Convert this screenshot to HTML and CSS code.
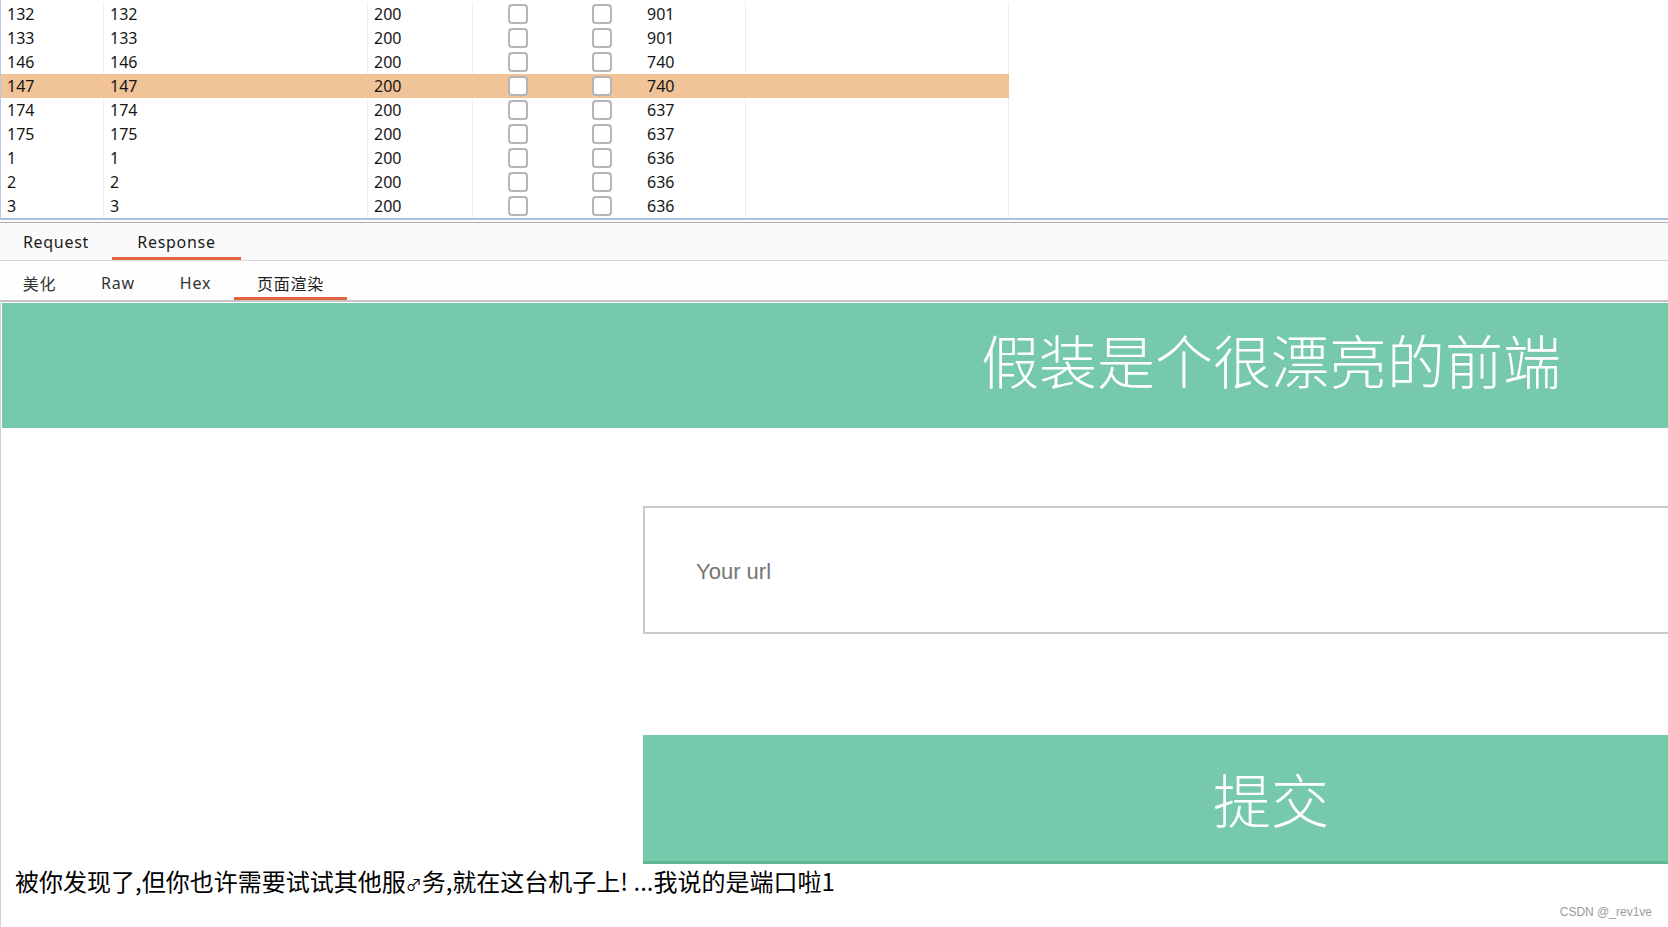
FILE: index.html
```html
<!DOCTYPE html>
<html lang="zh-CN">
<head>
<meta charset="utf-8">
<title>Response render</title>
<link rel="stylesheet" href="styles.css">
</head>
<body>
<div class="app">
  <div class="results">
    <div class="grid">
      <div class="row"><div class="c c1">132</div><div class="c c2">132</div><div class="c c3">200</div><div class="c c4"><span class="cb"></span></div><div class="c c5"><span class="cb"></span></div><div class="c c6">901</div><div class="c c7"></div></div>
      <div class="row"><div class="c c1">133</div><div class="c c2">133</div><div class="c c3">200</div><div class="c c4"><span class="cb"></span></div><div class="c c5"><span class="cb"></span></div><div class="c c6">901</div><div class="c c7"></div></div>
      <div class="row"><div class="c c1">146</div><div class="c c2">146</div><div class="c c3">200</div><div class="c c4"><span class="cb"></span></div><div class="c c5"><span class="cb"></span></div><div class="c c6">740</div><div class="c c7"></div></div>
      <div class="row sel"><div class="c c1">147</div><div class="c c2">147</div><div class="c c3">200</div><div class="c c4"><span class="cb"></span></div><div class="c c5"><span class="cb"></span></div><div class="c c6">740</div><div class="c c7"></div></div>
      <div class="row"><div class="c c1">174</div><div class="c c2">174</div><div class="c c3">200</div><div class="c c4"><span class="cb"></span></div><div class="c c5"><span class="cb"></span></div><div class="c c6">637</div><div class="c c7"></div></div>
      <div class="row"><div class="c c1">175</div><div class="c c2">175</div><div class="c c3">200</div><div class="c c4"><span class="cb"></span></div><div class="c c5"><span class="cb"></span></div><div class="c c6">637</div><div class="c c7"></div></div>
      <div class="row"><div class="c c1">1</div><div class="c c2">1</div><div class="c c3">200</div><div class="c c4"><span class="cb"></span></div><div class="c c5"><span class="cb"></span></div><div class="c c6">636</div><div class="c c7"></div></div>
      <div class="row"><div class="c c1">2</div><div class="c c2">2</div><div class="c c3">200</div><div class="c c4"><span class="cb"></span></div><div class="c c5"><span class="cb"></span></div><div class="c c6">636</div><div class="c c7"></div></div>
      <div class="row"><div class="c c1">3</div><div class="c c2">3</div><div class="c c3">200</div><div class="c c4"><span class="cb"></span></div><div class="c c5"><span class="cb"></span></div><div class="c c6">636</div><div class="c c7"></div></div>
    </div>
  </div>
  <div class="splitter"></div>
  <div class="tabs">
    <div class="tab tab-req">Request</div>
    <div class="tab tab-resp active">Response</div>
  </div>
  <div class="subtabs">
    <div class="stab s1">美化</div>
    <div class="stab s2">Raw</div>
    <div class="stab s3">Hex</div>
    <div class="stab s4 active">页面渲染</div>
  </div>
  <div class="render">
    <div class="page">
      <div class="hero">假装是个很漂亮的前端</div>
      <form class="form">
        <input class="url" type="text" placeholder="Your url">
        <button class="submit" type="button">提交</button>
      </form>
      <p class="msg">被你发现了,但你也许需要试试其他服<span class="sym">♂</span>务,就在这台机子上! ...我说的是端口啦1</p>
    </div>
  </div>
  <div class="watermark">CSDN @_rev1ve</div>
</div>
</body>
</html>
```

FILE: styles.css
```css
html, body {
  margin: 0;
  height: 100%;
}
body {
  background: #fff;
  font-family: "Noto Sans", "Noto Sans CJK SC", sans-serif;
  overflow: hidden;
}
.app {
  position: relative;
  width: 1668px;
  height: 927px;
  overflow: hidden;
  display: flex;
  flex-direction: column;
}

/* results table */
.results {
  padding-top: 2px;
  border-left: 1px solid #b6c9e8;
  border-bottom: 2px solid #a9bee3;
}
.grid {
  width: 1008px;
}
.row {
  display: grid;
  grid-template-columns: 103px 264px 105px 90px 78px 105px 263px;
  height: 24px;
}
.row.sel {
  background: #f0c399;
}
.c {
  box-sizing: border-box;
  height: 24px;
  display: flex;
  align-items: center;
  padding-left: 6px;
  font-size: 16px;
  color: #161616;
}
.c1, .c2, .c3, .c6, .c7 {
  border-right: 1px solid #eeeeee;
}
.row.sel .c {
  border-right-color: transparent;
}
.c4, .c5 {
  justify-content: center;
  padding-left: 0;
}
.cb {
  box-sizing: border-box;
  width: 20px;
  height: 20px;
  border: 2px solid #b5b5b5;
  border-radius: 4px;
  background: #fff;
}

.splitter {
  height: 2px;
}

/* Request / Response tabs */
.tabs {
  display: flex;
  height: 37px;
  background: #fafafa;
  border-top: 1px solid #adadad;
  border-bottom: 1px solid #d4d8d7;
}
.tab {
  box-sizing: border-box;
  display: flex;
  align-items: center;
  justify-content: center;
  padding-top: 4px;
  border-bottom: 3px solid transparent;
  font-size: 16px;
  letter-spacing: 0.7px;
  color: #1b1b1b;
}
.tab-req { width: 112px; }
.tab-resp { width: 129px; }
.tab.active { border-bottom-color: #e4683f; }

/* sub tabs */
.subtabs {
  display: flex;
  height: 39px;
  background: #fefefe;
}
.stab {
  box-sizing: border-box;
  display: flex;
  align-items: center;
  justify-content: center;
  padding-top: 8px;
  border-bottom: 3px solid transparent;
  font-size: 16px;
  letter-spacing: 0.8px;
  color: #333;
}
.s1 { width: 79px; }
.s2 { width: 78px; }
.s3 { width: 77px; }
.s4 { width: 113px; }
.stab.active { border-bottom-color: #e2643c; color: #222; }

/* rendered page */
.render {
  flex: 1;
  min-height: 0;
  border-top: 2px solid #c4c4c4;
  border-left: 1px solid #d4d4d4;
  padding: 1px 0 0 1px;
  overflow: hidden;
  background: #fff;
}
.page {
  width: 2538px;
}
.hero {
  box-sizing: border-box;
  height: 125px;
  padding-bottom: 12px;
  line-height: 113px;
  text-align: center;
  background: #76c9ab;
  color: #fff;
  font-family: "Noto Sans CJK SC", sans-serif;
  font-weight: 300;
  font-size: 58px;
}
.form {
  width: 1256px;
  margin: 78px auto 0;
  display: flex;
  flex-direction: column;
  gap: 101px;
}
.url {
  box-sizing: border-box;
  height: 128px;
  margin: 0;
  padding: 4px 0 0 51px;
  border: 2px solid #c9c9c9;
  border-radius: 0;
  outline: none;
  background: #fff;
  font-family: "Liberation Sans", sans-serif;
  font-size: 22px;
  color: #333;
}
.url::placeholder {
  color: #757575;
}
.submit {
  box-sizing: border-box;
  height: 129px;
  margin: 0;
  padding: 0;
  border: 0;
  border-bottom: 3px solid #64b794;
  border-radius: 0;
  background: #76c9ab;
  color: #fff;
  font-family: "Noto Sans CJK SC", sans-serif;
  font-weight: 300;
  font-size: 58px;
}
.msg {
  margin: 3px 0 0;
  padding-left: 13px;
  font-family: "Noto Sans CJK SC", sans-serif;
  font-size: 24px;
  line-height: 28px;
  color: #000;
}
.sym {
  font-size: 16px;
}

.watermark {
  position: absolute;
  right: 16px;
  bottom: 8px;
  font-family: "Liberation Sans", sans-serif;
  font-size: 12px;
  line-height: 14px;
  color: #9c9c9c;
}
```
